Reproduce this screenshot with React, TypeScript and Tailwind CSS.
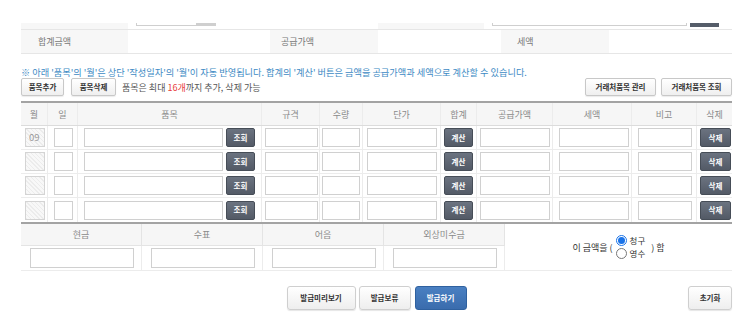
import React from "react";

const cols = "grid-cols-[27px_30px_184px_58px_43px_78px_36px_76px_79px_65px_35px]";

function Inp({ w, ml }: { w: string; ml: string }) {
  return <div className={`${w} ${ml} h-[19px] border border-[#d0d0d0] bg-white shrink-0`} />;
}

function DarkBtn({ label, w, ml }: { label: string; w: string; ml: string }) {
  return (
    <div
      className={`${w} ${ml} h-[19px] shrink-0 rounded-[2px] border border-[#464d57] bg-gradient-to-b from-[#6b7380] to-[#535a66] text-white text-[7.5px] font-bold leading-none flex items-center justify-center`}
    >
      {label}
    </div>
  );
}

function LightBtn({ label, w }: { label: string; w: string }) {
  return (
    <div
      className={`${w} h-[18px] rounded-[2px] border border-[#c8c8c8] bg-gradient-to-b from-white to-[#efefef] text-[#333] text-[7.5px] font-bold leading-none flex items-center justify-center shadow-[0_1px_1px_rgba(0,0,0,0.08)]`}
    >
      {label}
    </div>
  );
}

function Hatch({ text }: { text?: string }) {
  return (
    <div className="ml-[4px] w-[20px] h-[19px] shrink-0 border border-[#d4d4d4] bg-[repeating-linear-gradient(45deg,#ececec_0px,#ececec_1px,#f8f8f8_1px,#f8f8f8_3px)] flex items-center overflow-hidden">
      {text ? (
        <span className="ml-[3px] whitespace-nowrap text-[9.5px] leading-none text-[#999]">{text}</span>
      ) : null}
    </div>
  );
}

function DataRow({ first, last }: { first?: boolean; last?: boolean }) {
  const cell = "h-full flex items-center border-r border-[#ececec]";
  return (
    <div className={`grid ${cols} h-[24px] ${last ? "" : "border-b border-[#ececec]"}`}>
      <div className={cell}>
        <Hatch text={first ? "09" : undefined} />
      </div>
      <div className={cell}>
        <Inp w="w-[19px]" ml="ml-[6px]" />
      </div>
      <div className={cell}>
        <Inp w="w-[139px]" ml="ml-[6px]" />
        <DarkBtn label="조회" w="w-[29px]" ml="ml-[3px]" />
      </div>
      <div className={cell}>
        <Inp w="w-[53px]" ml="ml-[3px]" />
      </div>
      <div className={cell}>
        <Inp w="w-[38px]" ml="ml-[2px]" />
      </div>
      <div className={cell}>
        <Inp w="w-[70px]" ml="ml-[4px]" />
      </div>
      <div className={cell}>
        <DarkBtn label="계산" w="w-[29px]" ml="ml-[3px]" />
      </div>
      <div className={cell}>
        <Inp w="w-[70px]" ml="ml-[3px]" />
      </div>
      <div className={cell}>
        <Inp w="w-[70px]" ml="ml-[6px]" />
      </div>
      <div className={cell}>
        <Inp w="w-[54px]" ml="ml-[6px]" />
      </div>
      <div className="h-full flex items-center">
        <DarkBtn label="삭제" w="w-[31px]" ml="ml-[3px]" />
      </div>
    </div>
  );
}

function Radio({ checked, label }: { checked?: boolean; label: string }) {
  return (
    <div className="flex items-center gap-[3px] h-[13px]">
      {checked ? (
        <span className="w-[11px] h-[11px] rounded-full border border-[#1a73e8] bg-white flex items-center justify-center">
          <span className="w-[7px] h-[7px] rounded-full bg-[#1a73e8]" />
        </span>
      ) : (
        <span className="w-[11px] h-[11px] rounded-full border border-[#777] bg-white" />
      )}
      <span className="text-[8.5px] leading-none text-[#333]">{label}</span>
    </div>
  );
}

export default function App() {
  const headers = ["월", "일", "품목", "규격", "수량", "단가", "합계", "공급가액", "세액", "비고", "삭제"];
  return (
    <div className="w-[742px] h-[324px] bg-white overflow-hidden font-['Noto_Sans_CJK_KR',sans-serif] text-[9px] text-[#777]">
      <div className="pl-[21px] pr-[10px] pt-[23px]">
        {/* partial top row */}
        <div className="flex h-[6px] overflow-hidden">
          <div className="w-[107px] h-full bg-[#f7f7f7]" />
          <div className="w-[250px] h-full flex items-end">
            <div className="ml-[8px] mb-[3px] w-[61px] h-[20px] border border-[#cfcfcf] bg-white shrink-0" />
            <div className="mb-[3px] w-[19px] h-[20px] bg-[#cfcfcf] shrink-0" />
          </div>
          <div className="w-[106px] h-full bg-[#f7f7f7]" />
          <div className="w-[248px] h-full flex items-end">
            <div className="ml-[8px] mb-[3px] w-[195px] h-[20px] border border-[#cfcfcf] bg-white shrink-0" />
            <div className="ml-[3px] mb-[2px] w-[29px] h-[20px] bg-[#555d69] shrink-0" />
          </div>
        </div>
        {/* summary row */}
        <div className="flex h-[25px] border-y border-[#e6e6e6]">
          <div className="w-[107px] bg-[#f7f7f7] flex items-center pl-[17px] leading-none">합계금액</div>
          <div className="w-[142px]" />
          <div className="w-[108px] bg-[#f7f7f7] flex items-center pl-[11px] leading-none">공급가액</div>
          <div className="w-[123px]" />
          <div className="w-[108px] bg-[#f7f7f7] flex items-center pl-[16px] leading-none">세액</div>
          <div className="w-[123px]" />
        </div>
        {/* notice */}
        <div className="mt-[12px] h-[12px] leading-[12px] text-[9.2px] text-[#3d8ac4] whitespace-nowrap">
          ※ 아래 '품목'의 '월'은 상단 '작성일자'의 '월'이 자동 반영됩니다. 합계의 '계산' 버튼은 금액을 공급가액과 세액으로 계산할 수 있습니다.
        </div>
        {/* buttons row */}
        <div className="flex items-center h-[18px]">
          <LightBtn label="품목추가" w="w-[43px]" />
          <div className="ml-[7px]">
            <LightBtn label="품목삭제" w="w-[45px]" />
          </div>
          <div className="ml-[6px] text-[#555] leading-none">
            품목은 최대 <span className="text-[#e8403a]">16개</span>까지 추가, 삭제 가능
          </div>
          <div className="ml-auto flex gap-[5px]">
            <LightBtn label="거래처품목 관리" w="w-[71px]" />
            <LightBtn label="거래처품목 조회" w="w-[71px]" />
          </div>
        </div>
        {/* main table */}
        <div className="mt-[5px] border-t-2 border-[#a3a3a3]">
          <div className={`grid ${cols} h-[23px] bg-[#f6f6f6] border-b border-[#dcdcdc]`}>
            {headers.map((h, i) => (
              <div
                key={h}
                className={`flex items-center justify-center leading-none text-[#8a8a8a] ${i < headers.length - 1 ? "border-r border-[#ececec]" : ""}`}
              >
                {h}
              </div>
            ))}
          </div>
          <DataRow first />
          <DataRow />
          <DataRow />
          <DataRow last />
        </div>
        {/* payment table */}
        <div className="border-t-2 border-[#a3a3a3] border-b border-b-[#ececec] grid grid-cols-[121px_121px_121px_121px_227px] grid-rows-[22px_24px]">
          {["현금", "수표", "어음", "외상미수금"].map((h) => (
            <div
              key={h}
              className="bg-[#f6f6f6] border-r border-b border-[#e4e4e4] flex items-center justify-center leading-none text-[#8a8a8a]"
            >
              {h}
            </div>
          ))}
          <div className="row-span-2 flex items-center justify-center bg-white">
            <span className="text-[9px] text-[#333] leading-none">이 금액을 (</span>
            <div className="ml-[3px] flex flex-col">
              <Radio checked label="청구" />
              <Radio label="영수" />
            </div>
            <span className="ml-[6px] text-[9px] text-[#333] leading-none">) 함</span>
          </div>
          {[0, 1, 2, 3].map((i) => (
            <div key={i} className="border-r border-[#ececec] flex items-center">
              <div className="ml-[9px] w-[104px] h-[20px] border border-[#d0d0d0] bg-white" />
            </div>
          ))}
        </div>
        {/* bottom buttons */}
        <div className="mt-[15px] flex items-center h-[24px]">
          <div className="flex-1" />
          <div className="flex gap-[3px]">
            <div className="w-[69px] h-[24px] rounded-[3px] border border-[#cfcfcf] bg-gradient-to-b from-white to-[#eeeeee] text-[#333] text-[7.5px] font-bold flex items-center justify-center leading-none shadow-[0_1px_1px_rgba(0,0,0,0.1)]">
              발급미리보기
            </div>
            <div className="w-[52px] h-[24px] rounded-[3px] border border-[#cfcfcf] bg-gradient-to-b from-white to-[#eeeeee] text-[#333] text-[7.5px] font-bold flex items-center justify-center leading-none shadow-[0_1px_1px_rgba(0,0,0,0.1)]">
              발급보류
            </div>
            <div className="ml-[1px] w-[52px] h-[24px] rounded-[3px] border border-[#2f619f] bg-gradient-to-b from-[#4a80c2] to-[#3a6cad] text-white text-[7.5px] font-bold flex items-center justify-center leading-none">
              발급하기
            </div>
          </div>
          <div className="flex-1 flex justify-end">
            <div className="w-[44px] h-[24px] rounded-[3px] border border-[#cfcfcf] bg-gradient-to-b from-white to-[#eeeeee] text-[#333] text-[7.5px] font-bold flex items-center justify-center leading-none shadow-[0_1px_1px_rgba(0,0,0,0.1)]">
              초기화
            </div>
          </div>
        </div>
      </div>
    </div>
  );
}
